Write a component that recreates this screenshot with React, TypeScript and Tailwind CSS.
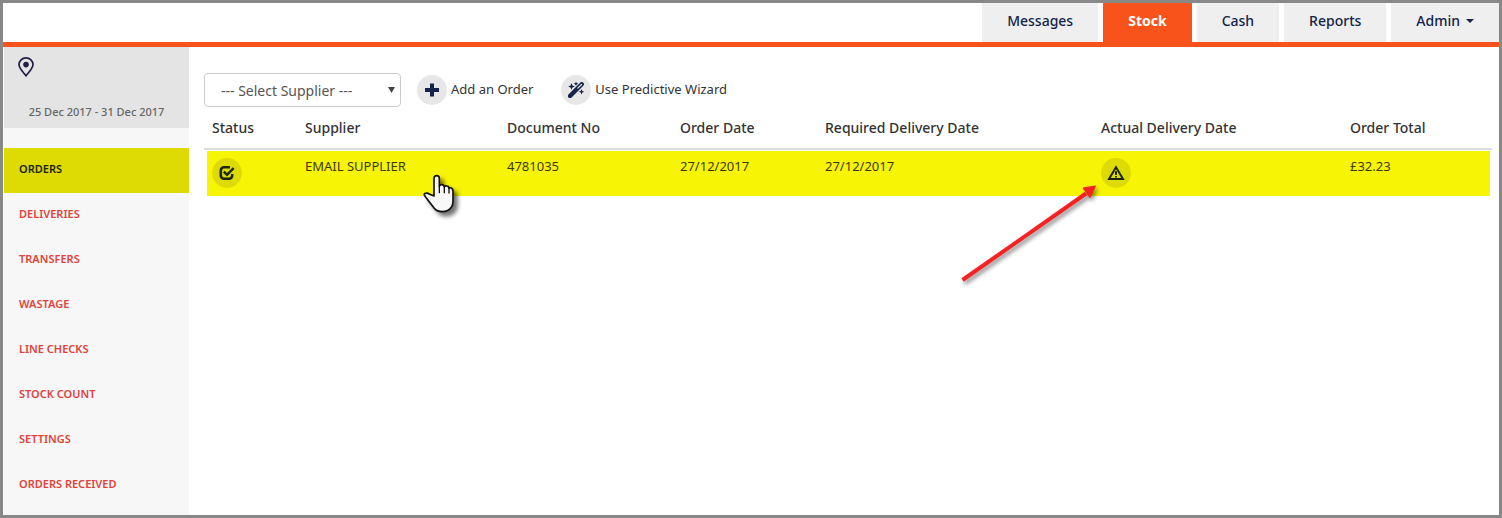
import type { ReactNode } from "react";

const tabs = ["Messages", "Stock", "Cash", "Reports", "Admin"];

const menu = [
  "Orders",
  "Deliveries",
  "Transfers",
  "Wastage",
  "Line Checks",
  "Stock Count",
  "Settings",
  "Orders Received",
];

const columns = [
  { label: "Status", width: "w-[93px]" },
  { label: "Supplier", width: "w-[202px]" },
  { label: "Document No", width: "w-[173px]" },
  { label: "Order Date", width: "w-[145px]" },
  { label: "Required Delivery Date", width: "w-[276px]" },
  { label: "Actual Delivery Date", width: "w-[249px]" },
  { label: "Order Total", width: "w-[150px]" },
];

function PinIcon() {
  return (
    <svg width="16" height="20" viewBox="0 0 16 20" fill="none" aria-hidden="true">
      <path
        d="M8 18.8C5.6 15.6 1 11.6 1 7.6a7 6.7 0 0 1 14 0c0 4-4.6 8-7 11.2z"
        stroke="#221f42"
        strokeWidth="1.7"
      />
      <circle cx="8" cy="7.6" r="2.8" fill="#221f42" />
    </svg>
  );
}

function PlusIcon() {
  return (
    <svg width="14" height="14" viewBox="0 0 14 14" aria-hidden="true">
      <path d="M5 .5h4V5h5v4H9v4.5H5V9H0V5h5z" fill="#14234a" />
    </svg>
  );
}

function WandIcon() {
  return (
    <svg width="16" height="16" viewBox="0 0 16 16" fill="none" aria-hidden="true">
      <path d="M2 14L13.700 2.300" stroke="#14234a" strokeWidth="4.4" strokeLinecap="round" />
      <path d="M9.800 6.200L13.500 2.500" stroke="#e7e7e7" strokeWidth="1.2" strokeLinecap="round" />
      <path
        d="M3.500 1.200l1 2.300 2.300 1-2.300 1-1 2.300-1-2.300-2.300-1 2.300-1zM8 -.4l.7 1.500 1.500.7-1.500.7L8 4l-.7-1.500-1.500-.7 1.500-.7zM13.500 7l.8 2 2 .8-2 .8-.8 2-.8-2-2-.8 2-.8z"
        fill="#14234a"
      />
    </svg>
  );
}

function CheckIcon() {
  return (
    <svg width="16" height="16" viewBox="0 0 16 16" fill="none" aria-hidden="true">
      <path
        d="M11 2.300H5A3.200 3.200 0 0 0 1.800 5.500v5A3.200 3.200 0 0 0 5 13.700h5a3.200 3.200 0 0 0 3.200-3.200V9"
        stroke="#1c2400"
        strokeWidth="2.6"
      />
      <path d="M4.800 6.600l3.200 3.200 6.600-6.600" stroke="#1c2400" strokeWidth="2.5" />
    </svg>
  );
}

function WarningIcon() {
  return (
    <svg width="18" height="16" viewBox="0 0 18 16" fill="none" aria-hidden="true">
      <path d="M9 2.200L16 14H2z" stroke="#1c2400" strokeWidth="2" />
      <path d="M8 6.300h2v3.700H8zM8 11h2v1.500H8z" fill="#1c2400" />
    </svg>
  );
}

function HandPointer() {
  return (
    <svg
      className="absolute left-[126px] top-[23px] overflow-visible drop-shadow-[4px_4px_2px_rgba(0,0,0,0.55)]"
      width="33"
      height="40"
      viewBox="681 342 99 120"
      aria-hidden="true"
    >
      <path
        d="M714 408V355q0-8 8-8t8 8v24q2-6 8-5 7 1 7 7 2-5 8-3 6 1 6 7 3-3 7-1 5 3 5 9v31q0 12-5 18-9 13-27 13-15 0-23-9l-14-18-15-19q-5-8 1-9 7-2 13 3z"
        fill="#f8f8f8"
        stroke="#111"
        strokeWidth="5"
        strokeLinejoin="round"
      />
      <path d="M730 378v20M745 380v18M759 384v15" stroke="#111" strokeWidth="4" strokeLinecap="round" />
    </svg>
  );
}

function RedArrow() {
  return (
    <svg
      className="pointer-events-none absolute right-full top-full overflow-visible drop-shadow-[2px_3px_2px_rgba(0,0,0,0.45)]"
      width="140"
      height="100"
      viewBox="0 0 140 100"
      aria-hidden="true"
    >
      <path d="M1.500 92L125 5.500" stroke="#f42222" strokeWidth="4" />
      <path d="M134.500-2L129 9.500 122 0z" fill="#f42222" stroke="#f42222" strokeWidth="1" />
    </svg>
  );
}

function ToolbarButton({ icon, children }: { icon: ReactNode; children: ReactNode }) {
  return (
    <button type="button" className="flex items-center gap-1 text-[13px] text-[#333]">
      <span className="flex size-[30px] items-center justify-center rounded-full bg-[#e7e7e7]">{icon}</span>
      {children}
    </button>
  );
}

function Header() {
  return (
    <header className="border-b-[5px] border-[#f7531b] bg-white">
      <nav className="flex h-[39px] justify-end gap-[5px]">
        {tabs.map((tab) => (
          <a
            key={tab}
            href="#"
            className={
              tab === "Stock"
                ? "flex items-center bg-[#f7531b] px-[25px] pb-1 text-sm font-bold text-white"
                : "flex items-center bg-[#efefef] px-[25px] pb-1 text-sm font-medium text-[#14234a]"
            }
          >
            {tab}
            {tab === "Admin" && (
              <svg className="ml-1.5" width="8" height="4" viewBox="0 0 8 4" aria-hidden="true">
                <path d="M0 0h8L4 4z" fill="#14234a" />
              </svg>
            )}
          </a>
        ))}
      </nav>
    </header>
  );
}

function Sidebar() {
  return (
    <aside className="ml-px w-[185px] shrink-0 bg-[#f7f7f7]">
      <div className="flex h-[81px] flex-col justify-between bg-[#e4e4e4] px-3.5 pb-2 pt-2.5">
        <PinIcon />
        <p className="text-center text-[11px] leading-4 font-medium text-[#666]">25 Dec 2017 - 31 Dec 2017</p>
      </div>
      <nav className="mt-5">
        {menu.map((item) => (
          <a
            key={item}
            href="#"
            className={
              item === "Orders"
                ? "flex h-[45px] items-center bg-[#dedb04] px-[15px] pb-0.5 text-[11px] font-semibold uppercase text-[#1c2400]"
                : "flex h-[45px] items-center px-[15px] pb-0.5 text-[11px] font-semibold uppercase text-[#e0433b]"
            }
          >
            {item}
          </a>
        ))}
      </nav>
    </aside>
  );
}

function OrdersTable() {
  return (
    <table className="w-full border-separate border-spacing-0 text-left">
      <thead>
        <tr>
          {columns.map((column) => (
            <th
              key={column.label}
              className={`${column.width} h-[43px] border-b-2 border-[#ddd] px-2 text-sm font-medium text-[#333]`}
            >
              {column.label}
            </th>
          ))}
        </tr>
      </thead>
      <tbody>
        <tr className="align-top text-[13px] leading-4 text-[#3b3a05] [&>td]:h-[46px] [&>td]:border-t [&>td]:border-white [&>td]:bg-[#f8f406] [&>td]:bg-clip-padding [&>td]:px-2 [&>td]:pt-[7px]">
          <td className="border-l-[3px] pl-[5px]!">
            <span className="flex size-[30px] items-center justify-center rounded-full bg-[#dedb04]">
              <CheckIcon />
            </span>
          </td>
          <td className="relative">
            EMAIL SUPPLIER
            <HandPointer />
          </td>
          <td>4781035</td>
          <td>27/12/2017</td>
          <td>27/12/2017</td>
          <td>
            <span className="relative flex size-[30px] items-center justify-center rounded-full bg-[#dedb04]">
              <WarningIcon />
              <RedArrow />
            </span>
          </td>
          <td className="border-r-2">£32.23</td>
        </tr>
      </tbody>
    </table>
  );
}

export default function App() {
  return (
    <div className="flex min-h-screen flex-col border-[3px] border-[#888] bg-white font-['Noto_Sans',sans-serif]">
      <Header />
      <div className="flex flex-1">
        <Sidebar />
        <main className="min-w-0 flex-1 pl-[15px] pr-[7px] pt-[26px]">
          <div className="flex items-center">
            <div className="relative mr-4 w-[197px]">
              <select
                aria-label="Supplier"
                className="h-[34px] w-full appearance-none rounded border border-[#ccc] bg-white pl-4 pr-6 pt-0.5 text-sm text-[#555]"
              >
                <option>--- Select Supplier ---</option>
              </select>
              <svg
                className="pointer-events-none absolute right-[6px] top-[14px]"
                width="7"
                height="6"
                viewBox="0 0 7 6"
                aria-hidden="true"
              >
                <path d="M0 0h7L3.500 6z" fill="#444" />
              </svg>
            </div>
            <div className="flex gap-7">
              <ToolbarButton icon={<PlusIcon />}>Add an Order</ToolbarButton>
              <ToolbarButton icon={<WandIcon />}>Use Predictive Wizard</ToolbarButton>
            </div>
          </div>
          <OrdersTable />
        </main>
      </div>
    </div>
  );
}
